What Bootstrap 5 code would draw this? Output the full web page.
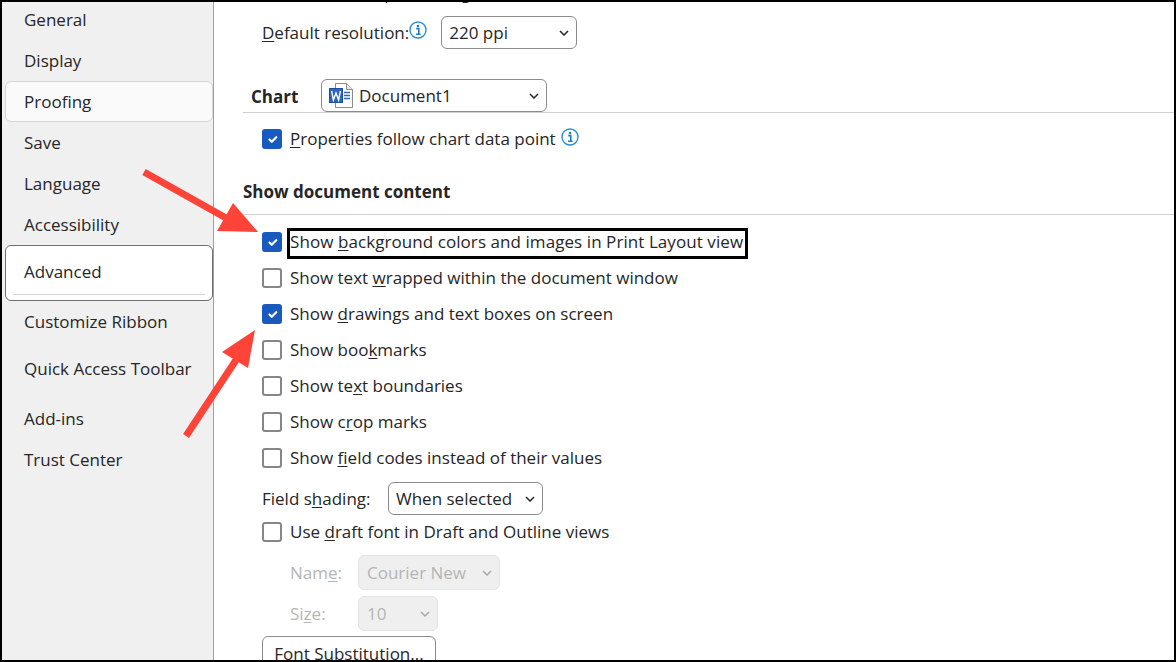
<!DOCTYPE html>
<html lang="en"><head><meta charset="utf-8"><title>Word Options</title>
<link href="https://cdn.jsdelivr.net/npm/bootstrap@5.3.0/dist/css/bootstrap.min.css" rel="stylesheet">
<style>
html,body{height:100%;margin:0;overflow:hidden}
body{font-family:"Open Sans","Noto Sans",sans-serif;font-size:17px;color:#262626;background:#fff}
.frame{position:relative;width:1176px;height:662px;border:2px solid #000;overflow:hidden;display:flex}
.side{width:212px;flex:none;background:#f0f0f0;border-right:1px solid #a0a0a0;padding-left:3px;display:flex;flex-direction:column}
.side-item{padding-left:19px;height:41px;line-height:36px;flex:none}
.side-item.hov{background:#fafafa;border:1px solid #d5d5d5;border-radius:6px;padding-left:18px;line-height:39px;margin:-3px 0 3px}
.side-item.act{background:#fff;border:1px solid #6f6f6f;border-radius:6px;padding-left:18px;height:56px;line-height:52px;position:relative;margin:-3px 0 3px}
.side-item.act::after{content:"";position:absolute;left:7px;right:7px;bottom:5px;border-bottom:1px solid #d5d5d5}
.side-item.qat{height:56px;line-height:48px}
.main{flex:1;min-width:0;overflow:hidden;padding-left:29px}
.opt{height:36px;display:flex;align-items:center;flex:none;white-space:nowrap}
.cut-row{height:24px;margin-top:-22px;align-items:flex-start;padding-left:49px}
.res-row{height:33px;margin-top:12px;padding-left:19px}
.prop-row{height:52px;padding-left:19px}
.form-check-input.box{width:20px;height:20px;margin:0 8px 0 0;flex:none;border:2px solid #868686;border-radius:3px;background-color:#fff}
.form-check-input.box:checked{background-color:#185abd;border-color:#185abd;background-size:15px}
.head{font-weight:700;border-bottom:1px solid #d0d0d0;display:flex}
.head-chart{height:34px;margin-top:30px;padding-left:8px;align-items:flex-start}
.head-chart .lbl{width:70px;padding-top:5px}
.head-doc{height:50px;align-items:center;padding-top:5px}
.rows{padding-left:19px;margin-top:9px;display:flex;flex-direction:column}
u{text-underline-offset:2px;text-decoration-thickness:1px}
.form-select.sel{font-size:17px;color:#262626;height:33px;padding:0 0 0 7px;border:1px solid #8b8b8b;border-radius:6px;line-height:31px;flex:none;background-size:10px 6px;background-position:right 7px center;background-image:url("data:image/svg+xml,%3Csvg xmlns='http://www.w3.org/2000/svg' viewBox='0 0 10 6'%3E%3Cpath d='M1 1l4 4 4-4' fill='none' stroke='%23262626' stroke-width='1.5'/%3E%3C/svg%3E")}
.form-select.off{height:35px;margin:0;background-color:#efefef;border-color:#e4e4e4;color:#b5b5b5;opacity:1;padding-left:8px;background-image:url("data:image/svg+xml,%3Csvg xmlns='http://www.w3.org/2000/svg' viewBox='0 0 10 6'%3E%3Cpath d='M1 1l4 4 4-4' fill='none' stroke='%23a8a8a8' stroke-width='1.5'/%3E%3C/svg%3E")}
.sel-res{width:136px;margin-left:14px}
.sel-chart{width:226px;padding-left:37px!important}
.sel-field{width:155px}
.sel-name{width:142px}
.sel-size{width:80px}
.dim{color:#b5b5b5;height:35px;margin-top:6px;padding-left:24px}
.dim .lbl{width:72px;padding-left:4px}
.field-row{height:33px;margin-top:6px}
.field-row .lbl{width:126px}
.draft-row{height:34px}
.info{align-self:flex-start;flex:none}
.info-res{margin:5px 0 0 0}
.info-prop{margin:15px 0 0 5px}
.wordfile{position:absolute;left:8px;top:4px}
.selwrap{position:relative;flex:none}
.focusbox{display:block;border:3px solid #000;height:31px;line-height:22px;margin:3px 0 0 -3px;width:461px;letter-spacing:.07px}
.btn.fontbtn{font-size:17px;color:#262626;border:1px solid #8b8b8b;border-radius:6px;background:#fff;padding:0;height:35px;width:174px;white-space:nowrap;line-height:33px;display:block;margin-top:5px}
.arrows{position:absolute;left:-2px;top:-2px;pointer-events:none}
</style></head><body>
<div class="frame">
<nav class="side">
<div class="side-item">General</div>
<div class="side-item">Display</div>
<div class="side-item hov">Proofing</div>
<div class="side-item">Save</div>
<div class="side-item">Language</div>
<div class="side-item">Accessibility</div>
<div class="side-item act">Advanced</div>
<div class="side-item">Customize Ribbon</div>
<div class="side-item qat">Quick Access Toolbar</div>
<div class="side-item">Add-ins</div>
<div class="side-item">Trust Center</div>
</nav>
<main class="main">
<div class="opt cut-row"><span>Do not compress images in file</span></div>
<div class="opt res-row"><span><u>D</u>efault resolution:</span>
<svg class="info info-res" width="18" height="18" viewBox="0 0 18 18"><circle cx="9" cy="9" r="8" fill="#fff" stroke="#2b8fd6" stroke-width="1.4"/><circle cx="9" cy="5" r="1.3" fill="#1f7fc4"/><path d="M7.2 7.6h2.6v5.4M7 13.2h4.6" fill="none" stroke="#1f7fc4" stroke-width="1.6"/></svg>
<select class="form-select sel sel-res" aria-label="Default resolution"><option>220 ppi</option></select></div>
<div class="head head-chart"><span class="lbl">Chart</span>
<div class="selwrap"><select class="form-select sel sel-chart" aria-label="Chart"><option>Document1</option></select>
<svg class="wordfile" width="24" height="25" viewBox="0 0 24 25"><path d="M6.5.5h11l6 6v18h-17z" fill="#fff" stroke="#8a8a8a"/><path d="M17.5.5v6h6" fill="#e6e6e6" stroke="#8a8a8a"/><path d="M15 9.5h6M15 12.5h6M15 15.5h6" stroke="#2b66b8" stroke-width="1.4"/><rect x=".5" y="5.5" width="13" height="14" fill="#2b66b8" stroke="#1d4f9c"/><path d="M2.6 8l1.8 9 2.6-7 2.6 7 1.8-9" fill="none" stroke="#fff" stroke-width="1.4"/></svg>
</div></div>
<div class="opt prop-row"><input class="form-check-input box" type="checkbox" checked aria-label="Properties"><span><u>P</u>roperties follow chart data point</span>
<svg class="info info-prop" width="18" height="18" viewBox="0 0 18 18"><circle cx="9" cy="9" r="8" fill="#fff" stroke="#2b8fd6" stroke-width="1.4"/><circle cx="9" cy="5" r="1.3" fill="#1f7fc4"/><path d="M7.2 7.6h2.6v5.4M7 13.2h4.6" fill="none" stroke="#1f7fc4" stroke-width="1.6"/></svg></div>
<div class="head head-doc"><span>Show document content</span></div>
<div class="rows">
<div class="opt"><input class="form-check-input box" type="checkbox" checked aria-label="a"><span class="focusbox">Show <u>b</u>ackground colors and images in Print Layout view</span></div>
<div class="opt"><input class="form-check-input box" type="checkbox" aria-label="b"><span>Show text <u>w</u>rapped within the document window</span></div>
<div class="opt"><input class="form-check-input box" type="checkbox" checked aria-label="c"><span>Show <u>d</u>rawings and text boxes on screen</span></div>
<div class="opt"><input class="form-check-input box" type="checkbox" aria-label="d"><span>Show boo<u>k</u>marks</span></div>
<div class="opt"><input class="form-check-input box" type="checkbox" aria-label="e"><span>Show te<u>x</u>t boundaries</span></div>
<div class="opt"><input class="form-check-input box" type="checkbox" aria-label="f"><span>Show c<u>r</u>op marks</span></div>
<div class="opt"><input class="form-check-input box" type="checkbox" aria-label="g"><span>Show <u>f</u>ield codes instead of their values</span></div>
<div class="opt field-row"><span class="lbl">Field s<u>h</u>ading:</span><select class="form-select sel sel-field" aria-label="Field shading"><option>When selected</option></select></div>
<div class="opt draft-row"><input class="form-check-input box" type="checkbox" aria-label="h"><span>Use <u>d</u>raft font in Draft and Outline views</span></div>
<div class="opt dim"><span class="lbl">Nam<u>e</u>:</span><select class="form-select sel off sel-name" disabled aria-label="Name"><option>Courier New</option></select></div>
<div class="opt dim"><span class="lbl">Si<u>z</u>e:</span><select class="form-select sel off sel-size" disabled aria-label="Size"><option>10</option></select></div>
<button class="btn fontbtn" type="button">Font Substitution...</button>
</div>
</main>
<svg class="arrows" width="1176" height="662" viewBox="0 0 1176 662">
<path d="M144 172L226 218" stroke="#fe4438" stroke-width="7" fill="none"/>
<path d="M233 203L258 232L217 231z" fill="#fe4438"/>
<path d="M186 436L236 360" stroke="#fe4438" stroke-width="7" fill="none"/>
<path d="M222 352L255 330L248 368z" fill="#fe4438"/>
</svg>
</div>
</body></html>
